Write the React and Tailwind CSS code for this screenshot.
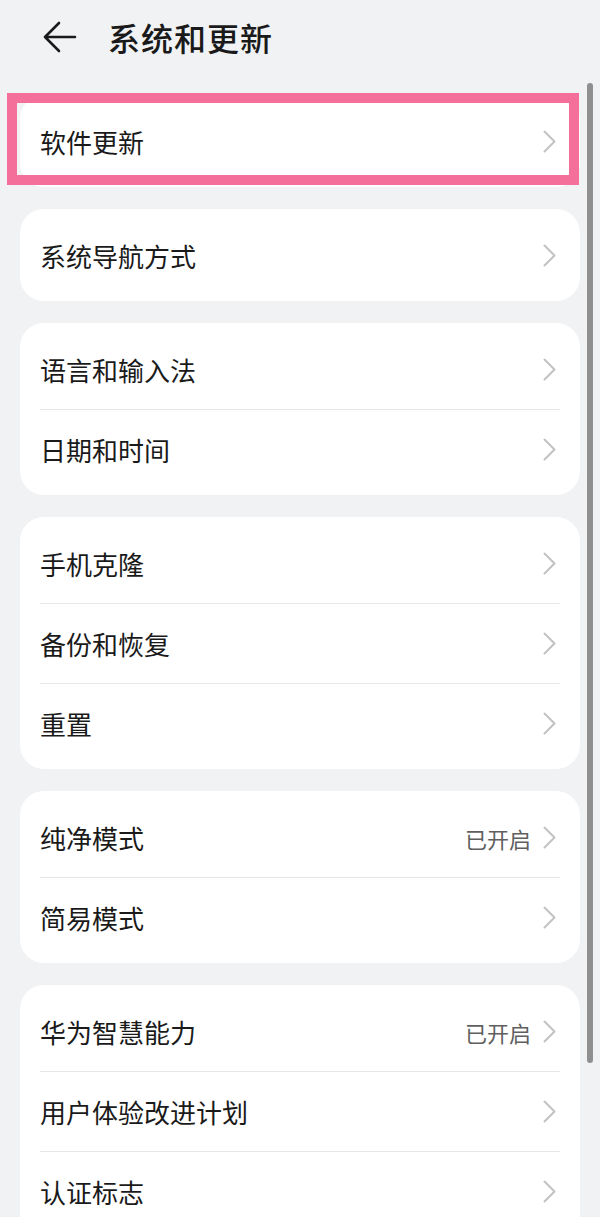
import React from 'react';

const groups = [
  [{ label: '软件更新' }],
  [{ label: '系统导航方式' }],
  [{ label: '语言和输入法' }, { label: '日期和时间' }],
  [{ label: '手机克隆' }, { label: '备份和恢复' }, { label: '重置' }],
  [{ label: '纯净模式', value: '已开启' }, { label: '简易模式' }],
  [{ label: '华为智慧能力', value: '已开启' }, { label: '用户体验改进计划' }, { label: '认证标志' }],
];

const font = { fontFamily: '"Noto Sans CJK SC", "Noto Sans", sans-serif' };

const Chevron = () => (
  <svg width="13" height="23" viewBox="0 0 13 23" fill="none">
    <polyline points="1.5,1.5 11.5,11.5 1.5,21.5" stroke="#c2c2c2" strokeWidth="2" strokeLinecap="round" strokeLinejoin="round" />
  </svg>
);

const BackArrow = () => (
  <svg width="35" height="32" viewBox="0 0 35 32" fill="none">
    <path d="M3 16 H33 M17 2 L3 16 L17 30" stroke="#1a1a1a" strokeWidth="2.6" strokeLinecap="round" strokeLinejoin="round" />
  </svg>
);

const Row = ({ item, first }) => (
  <div className="h-[80px] mx-[20px] flex items-center justify-between border-t border-[#e7e7e7]" style={first ? { borderTopColor: 'transparent' } : undefined}>
    <span className="text-[26px] text-[#1a1a1a] leading-none">{item.label}</span>
    <div className="flex items-center gap-[12px] pr-[4px]">
      {item.value && <span className="text-[22px] text-[#5f5f5f] leading-none">{item.value}</span>}
      <Chevron />
    </div>
  </div>
);

const App = () => {
  return (
    <div className="relative w-[600px] h-[1217px] overflow-hidden bg-[#f1f2f4]" style={font}>
      <div className="h-[74px] flex items-center pl-[42px] gap-[31px]">
        <BackArrow />
        <h1 className="text-[32px] font-medium text-[#1a1a1a] leading-none tracking-[1px]">系统和更新</h1>
      </div>

      <div className="flex flex-col gap-[22px] pt-[21px] pl-[20px] pr-[20px]">
        {groups.map((rows, gi) => (
          <div key={gi} className="relative bg-white rounded-[24px] py-[6px]">
            {rows.map((item, i) => (
              <Row key={item.label} item={item} first={i === 0} />
            ))}
            {gi === 0 && (
              <div className="absolute left-[-13px] right-[1px] top-[-2px] bottom-[2px] border-[10px] border-[#f4709a] pointer-events-none" />
            )}
          </div>
        ))}
      </div>

      <div className="absolute left-[587px] top-[83px] w-[6px] h-[980px] rounded-full bg-[#8f8f8f]" />
    </div>
  );
};

export default App;
